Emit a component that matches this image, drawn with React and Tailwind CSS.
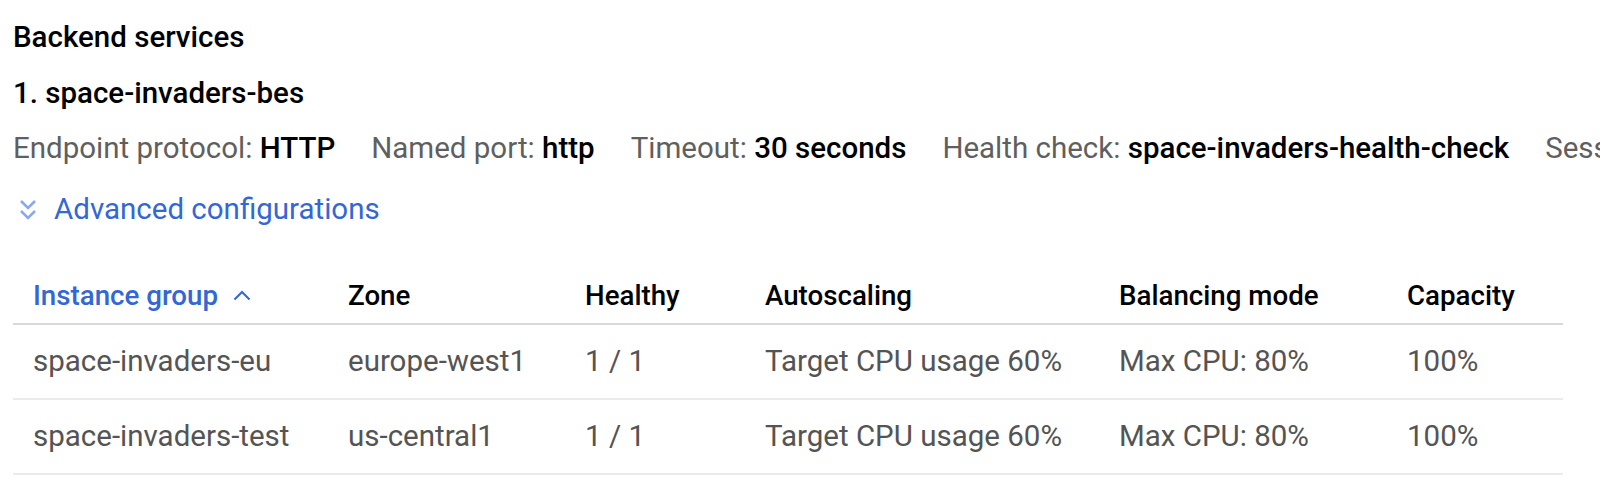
export default function App() {
  const meta = [
    ["Endpoint protocol:", "HTTP"],
    ["Named port:", "http"],
    ["Timeout:", "30 seconds"],
    ["Health check:", "space-invaders-health-check"],
    ["Session affinity:", "None"],
  ];
  const rows = [
    ["space-invaders-eu", "europe-west1", "1 / 1", "Target CPU usage 60%", "Max CPU: 80%", "100%"],
    ["space-invaders-test", "us-central1", "1 / 1", "Target CPU usage 60%", "Max CPU: 80%", "100%"],
  ];
  const grid = "grid grid-cols-[315px_237px_180px_354px_288px_176px]";
  return (
    <div className="w-[1600px] h-[504px] bg-white overflow-hidden pl-[13px] font-['Roboto',_'Liberation_Sans',_sans-serif]">
      <h2 className="pt-[21px] text-[29.5px] leading-[32px] font-medium text-[#000] whitespace-nowrap">Backend services</h2>
      <h3 className="mt-[24px] text-[29.5px] leading-[32px] font-medium text-[#000] whitespace-nowrap">1. space-invaders-bes</h3>
      <div className="mt-[23px] flex gap-[36px] text-[29.5px] leading-[32px] whitespace-nowrap">
        {meta.map(([k, v]) => (
          <div key={k} className="shrink-0">
            <span className="text-[#5f5f5f]">{k} </span>
            <span className="text-[#000] font-medium">{v}</span>
          </div>
        ))}
      </div>
      <div className="mt-[29px] flex items-center h-[33px] text-[29.5px] text-[#3367d6] whitespace-nowrap">
        <svg width="18" height="22" viewBox="0 0 18 22" className="ml-[6px] mr-[17px]" fill="none" stroke="#8aa8ee" strokeWidth="2.5">
          <path d="M2 2l7 7 7-7" />
          <path d="M2 12l7 7 7-7" />
        </svg>
        <span>Advanced configurations</span>
      </div>
      <div className="mt-[42px] w-[1550px] whitespace-nowrap">
        <div className={`${grid} h-[57px] items-center border-b-2 border-[#d9d9d9] font-medium text-[27.7px] text-[#000]`}>
          <div className="pl-[20px] flex items-center text-[#3367d6]">
            <span>Instance group</span>
            <svg width="18" height="11" viewBox="0 0 18 11" className="ml-[15px]" fill="none" stroke="#3367d6" strokeWidth="2">
              <path d="M1.5 9.5l7.5-7.5 7.5 7.5" />
            </svg>
          </div>
          <div className="pl-[20px]">Zone</div>
          <div className="pl-[20px]">Healthy</div>
          <div className="pl-[20px]">Autoscaling</div>
          <div className="pl-[20px]">Balancing mode</div>
          <div className="pl-[20px]">Capacity</div>
        </div>
        {rows.map((r) => (
          <div key={r[0]} className={`${grid} h-[75px] items-center border-b-2 border-[#ebebeb] text-[29.5px] text-[#545454]`}>
            {r.map((c, i) => (
              <div key={i} className="pl-[20px]">{c}</div>
            ))}
          </div>
        ))}
      </div>
    </div>
  );
}
